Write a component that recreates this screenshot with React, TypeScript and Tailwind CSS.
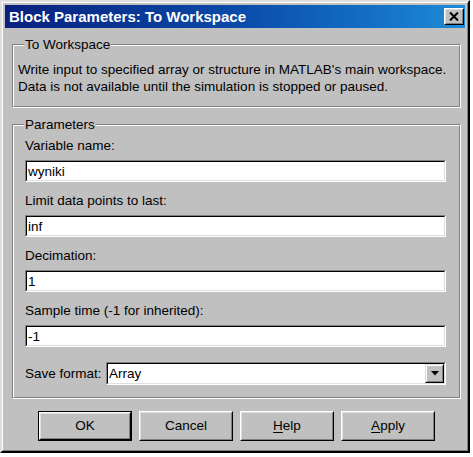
import React from "react";

function Group({ legend, className, children }: { legend: string; className: string; children: React.ReactNode }) {
  return (
    <div className={`relative border border-t-[#808080] border-l-[#808080] border-r-white border-b-white ${className}`}>
      <div className="h-full border border-t-white border-l-white border-r-[#808080] border-b-[#808080]">{children}</div>
      <span className="absolute left-[11px] top-[-9px] bg-[#c0c0c0] px-[1px] text-[13.5px] leading-[17px] text-black">{legend}</span>
    </div>
  );
}

function Sunken({ className, children }: { className: string; children: React.ReactNode }) {
  return (
    <div className={`border border-t-[#808080] border-l-[#808080] border-r-white border-b-white ${className}`}>
      <div className="flex h-full items-center border border-t-black border-l-black border-r-[#dfdfdf] border-b-[#dfdfdf] bg-white">
        {children}
      </div>
    </div>
  );
}

function Field({ label, value }: { label: string; value: string }) {
  return (
    <div className="flex flex-col">
      <div className="h-[17px] leading-[17px]">{label}</div>
      <Sunken className="mt-[6px] h-[22px] w-[421px]">
        <span className="pl-[1px] leading-[17px]">{value}</span>
      </Sunken>
    </div>
  );
}

function Btn({ label, u, def }: { label: string; u?: number; def?: boolean }) {
  const text =
    u === undefined ? (
      label
    ) : (
      <>
        {label.slice(0, u)}
        <span className="underline underline-offset-2">{label[u]}</span>
        {label.slice(u + 1)}
      </>
    );
  return (
    <div className={`h-[30px] w-[94px] ${def ? "border border-black" : ""}`}>
      <div className="h-full border border-t-white border-l-white border-r-black border-b-black">
        <div className="flex h-full items-center justify-center border border-t-[#dfdfdf] border-l-[#dfdfdf] border-r-[#808080] border-b-[#808080] text-[13.5px]">
          {text}
        </div>
      </div>
    </div>
  );
}

export default function App() {
  return (
    <div className="h-[457px] w-[473px] bg-white font-['Liberation_Sans',Arial,sans-serif] text-[13.5px] text-black">
      <div className="h-[453px] w-[470px] border-2 border-t-[#dfdfdf] border-l-[#dfdfdf] border-r-black border-b-black">
        <div className="flex h-full flex-col border border-t-white border-l-white border-r-[#808080] border-b-[#808080] bg-[#c0c0c0] p-[2px]">
          {/* title bar */}
          <div className="flex h-[23px] items-center justify-between bg-gradient-to-r from-[#0a1f7e] via-[#0b4aa8] to-[#1f8ad8] pl-[4px] pr-[1px]">
            <span className="text-[15px] font-bold leading-[23px] text-white">Block Parameters: To Workspace</span>
            <div className="h-[17px] w-[20px] border border-t-white border-l-white border-r-black border-b-black">
              <div className="flex h-full items-center justify-center border border-t-[#dfdfdf] border-l-[#dfdfdf] border-r-[#808080] border-b-[#808080] bg-[#c0c0c0]">
                <svg width="10" height="9" viewBox="0 0 10 9">
                  <path d="M1 0.5 L9 8.5 M9 0.5 L1 8.5" stroke="black" strokeWidth="2" />
                </svg>
              </div>
            </div>
          </div>

          <div className="flex flex-col pl-[7px] pr-[4px]">
            <Group legend="To Workspace" className="mt-[16px] h-[64px]">
              <div className="whitespace-nowrap pl-[4px] pt-[15px] leading-[17px]">
                <div>Write input to specified array or structure in MATLAB's main workspace.</div>
                <div>Data is not available until the simulation is stopped or paused.</div>
              </div>
            </Group>

            <Group legend="Parameters" className="mt-[16px] h-[275px]">
              <div className="flex flex-col gap-[10px] pl-[11px] pt-[11px]">
                <Field label="Variable name:" value="wyniki" />
                <Field label="Limit data points to last:" value="inf" />
                <Field label="Decimation:" value="1" />
                <Field label="Sample time (-1 for inherited):" value="-1" />
                <div className="mt-[5px] flex items-center">
                  <span className="w-[81px] whitespace-nowrap leading-[17px]">Save format:</span>
                  <Sunken className="h-[23px] w-[340px]">
                    <span className="flex-1 pl-[1px] leading-[17px]">Array</span>
                    <div className="h-full w-[19px] border border-t-[#dfdfdf] border-l-[#dfdfdf] border-r-black border-b-black">
                      <div className="flex h-full items-center justify-center border border-t-white border-l-white border-r-[#808080] border-b-[#808080] bg-[#c0c0c0]">
                        <svg width="8" height="5" viewBox="0 0 8 5">
                          <path d="M0 0 H8 L4 4.5 Z" fill="black" />
                        </svg>
                      </div>
                    </div>
                  </Sunken>
                </div>
              </div>
            </Group>
          </div>

          <div className="ml-[33px] mt-[12px] flex gap-[7px]">
            <Btn label="OK" def />
            <Btn label="Cancel" />
            <Btn label="Help" u={0} />
            <Btn label="Apply" u={0} />
          </div>
        </div>
      </div>
    </div>
  );
}
